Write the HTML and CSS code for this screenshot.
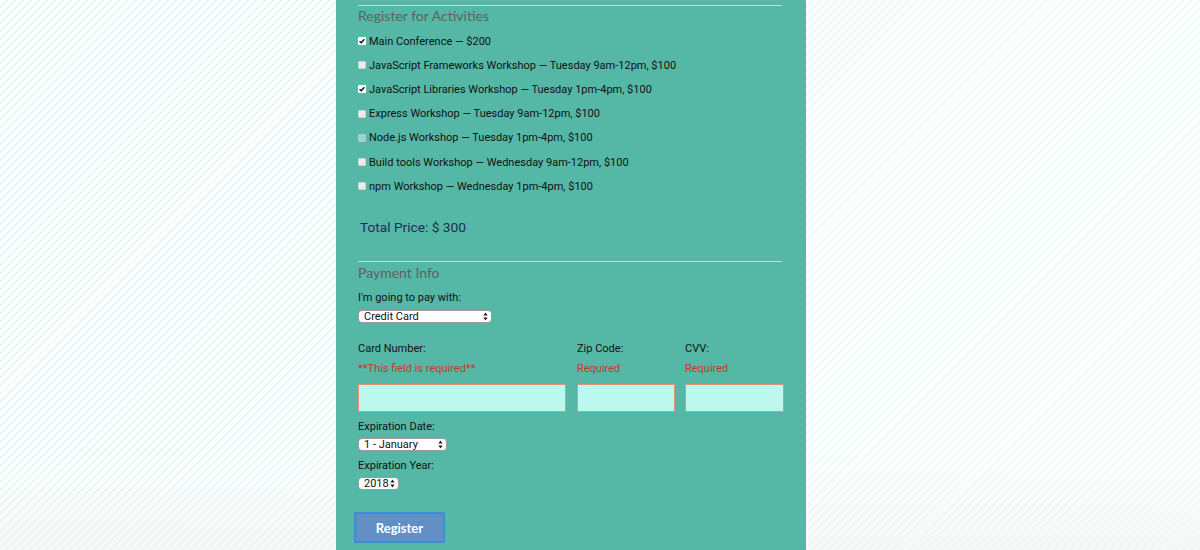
FILE: index.html
```html
<!DOCTYPE html>
<html lang="en">
<head>
<meta charset="utf-8">
<title>Register</title>
<link rel="stylesheet" href="styles.css">
</head>
<body>
<main class="form-wrap">
  <form class="form">
    <section class="activities">
      <hr class="rule">
      <h2 class="legend">Register for Activities</h2>
      <label class="activity"><span class="box checked"><svg viewBox="0 0 8 8" width="8" height="8"><path d="M1.6 4.2 L3.2 5.7 L6.4 2.3" fill="none" stroke="#111" stroke-width="1.4"/></svg></span>Main Conference — $200</label>
      <label class="activity"><span class="box"></span>JavaScript Frameworks Workshop — Tuesday 9am-12pm, $100</label>
      <label class="activity"><span class="box checked"><svg viewBox="0 0 8 8" width="8" height="8"><path d="M1.6 4.2 L3.2 5.7 L6.4 2.3" fill="none" stroke="#111" stroke-width="1.4"/></svg></span>JavaScript Libraries Workshop — Tuesday 1pm-4pm, $100</label>
      <label class="activity"><span class="box"></span>Express Workshop — Tuesday 9am-12pm, $100</label>
      <label class="activity"><span class="box disabled"></span>Node.js Workshop — Tuesday 1pm-4pm, $100</label>
      <label class="activity"><span class="box"></span>Build tools Workshop — Wednesday 9am-12pm, $100</label>
      <label class="activity"><span class="box"></span>npm Workshop — Wednesday 1pm-4pm, $100</label>
      <p class="total">Total Price: $ 300</p>
    </section>

    <section class="payment">
      <hr class="rule">
      <h2 class="legend">Payment Info</h2>
      <p class="label">I'm going to pay with:</p>
      <div class="select-wrap w-pay">
        <select class="select"><option>Credit Card</option></select>
        <svg class="arrows" viewBox="0 0 5 9" width="5" height="9"><path d="M0.3 3.6 L2.5 0.6 L4.7 3.6 Z M0.3 5.4 L2.5 8.4 L4.7 5.4 Z" fill="#222"/></svg>
      </div>

      <div class="card-grid">
        <span class="label">Card Number:</span>
        <span class="label">Zip Code:</span>
        <span class="label">CVV:</span>
        <span class="error">**This field is required**</span>
        <span class="error">Required</span>
        <span class="error">Required</span>
        <input class="field" type="text">
        <input class="field" type="text">
        <input class="field" type="text">
      </div>

      <p class="label exp-label">Expiration Date:</p>
      <div class="select-wrap w-month">
        <select class="select"><option>1 - January</option></select>
        <svg class="arrows" viewBox="0 0 5 9" width="5" height="9"><path d="M0.3 3.6 L2.5 0.6 L4.7 3.6 Z M0.3 5.4 L2.5 8.4 L4.7 5.4 Z" fill="#222"/></svg>
      </div>
      <p class="label exp-label year-label">Expiration Year:</p>
      <div class="select-wrap w-year">
        <select class="select"><option>2018</option></select>
        <svg class="arrows" viewBox="0 0 5 9" width="5" height="9"><path d="M0.3 3.6 L2.5 0.6 L4.7 3.6 Z M0.3 5.4 L2.5 8.4 L4.7 5.4 Z" fill="#222"/></svg>
      </div>
    </section>

    <button class="submit" type="button">Register</button>
  </form>
</main>
</body>
</html>
```

FILE: styles.css
```css
html, body {
  margin: 0;
  padding: 0;
}

body {
  min-height: 550px;
  overflow: hidden;
  font-family: Roboto, "Liberation Sans", Arial, sans-serif;
  background:
    linear-gradient(to bottom, rgba(255,255,255,0) 80%, rgba(240,242,242,0.6) 100%),
    linear-gradient(135deg, rgba(255,255,255,0) 30%, rgba(255,255,255,0.5) 100%),
    repeating-linear-gradient(135deg, #ffffff 0px, #ffffff 4.3px, #dcf8f3 4.3px, #dcf8f3 5.7px);
}

.form-wrap {
  width: 470px;
  min-height: 560px;
  margin-left: 336px;
  padding: 5px 23px 0 22px;
  box-sizing: border-box;
  background: #55b8a6;
}

.form {
  display: flex;
  flex-direction: column;
}

.rule {
  margin: 0;
  border: 0;
  height: 1px;
  background: #a9e7dc;
  width: 424px;
}

.legend {
  margin: 1px 0 0;
  font-family: Lato, "Open Sans", sans-serif;
  font-weight: 400;
  font-size: 14px;
  line-height: 18px;
  color: #5f6160;
}

.activities {
  display: flex;
  flex-direction: column;
}

.activities .legend {
  margin-bottom: 4px;
}

.activity {
  display: flex;
  align-items: center;
  height: 24.2px;
  font-size: 11px;
  color: #111;
}

.box {
  display: inline-flex;
  align-items: center;
  justify-content: center;
  width: 8px;
  height: 8px;
  box-sizing: border-box;
  margin-right: 3px;
  background: #ececec;
  border: 1px solid #c9d2d0;
  border-radius: 1px;
}

.box.checked {
  background: #fbfbfb;
  border: none;
}

.box.disabled {
  background: #9fd2c8;
  border-color: #9fd2c8;
}

.total {
  margin: 19px 0 0 2px;
  font-size: 13.7px;
  line-height: 20px;
  color: #1f2d50;
}

.payment {
  display: flex;
  flex-direction: column;
  margin-top: 24px;
}

.payment .legend {
  margin-top: 2px;
}

.label {
  margin: 0;
  font-size: 11px;
  line-height: 14px;
  color: #111;
}

.payment .legend + .label {
  margin-top: 9px;
}

.select-wrap {
  position: relative;
  height: 13px;
  margin-top: 5px;
}

.w-pay { width: 134px; }
.w-month { width: 89px; }
.w-year { width: 41px; }

.select {
  display: block;
  appearance: none;
  -webkit-appearance: none;
  width: 100%;
  height: 13px;
  margin: 0;
  padding: 0 0 0 5px;
  box-sizing: border-box;
  border: 1px solid #9a9a9a;
  border-radius: 4px;
  background: #fff;
  font-family: Roboto, "Liberation Sans", Arial, sans-serif;
  font-size: 11px;
  line-height: 11px;
  color: #111;
}

.arrows {
  position: absolute;
  right: 4px;
  top: 2px;
  pointer-events: none;
}

.card-grid {
  display: grid;
  grid-template-columns: 208px 98px 98px;
  column-gap: 11px;
  margin-top: 19px;
}

.card-grid .label:nth-child(3) {
  margin-left: -1px;
}

.error {
  margin-top: 6px;
  font-size: 11px;
  line-height: 14px;
  color: #c33a26;
}

.card-grid .error:nth-child(6) {
  margin-left: -1px;
}

.field {
  margin-top: 8px;
  height: 28px;
  box-sizing: border-box;
  border: 1.5px solid #e59277;
  background: #bdf8ee;
  padding: 0;
}

.card-grid .field:nth-child(9) {
  margin-left: -1px;
}

.exp-label {
  margin-top: 8px;
}

.exp-label + .select-wrap {
  margin-top: 4px;
}

.year-label {
  margin-top: 8px;
}

.submit {
  align-self: flex-start;
  margin: 22px 0 0 -4px;
  width: 91px;
  height: 31px;
  box-sizing: border-box;
  border: 2px solid #3b8ed6;
  background: #6290c5;
  color: #fff;
  font-family: Lato, "Open Sans", sans-serif;
  font-weight: 700;
  font-size: 13px;
  padding: 0;
}
```
